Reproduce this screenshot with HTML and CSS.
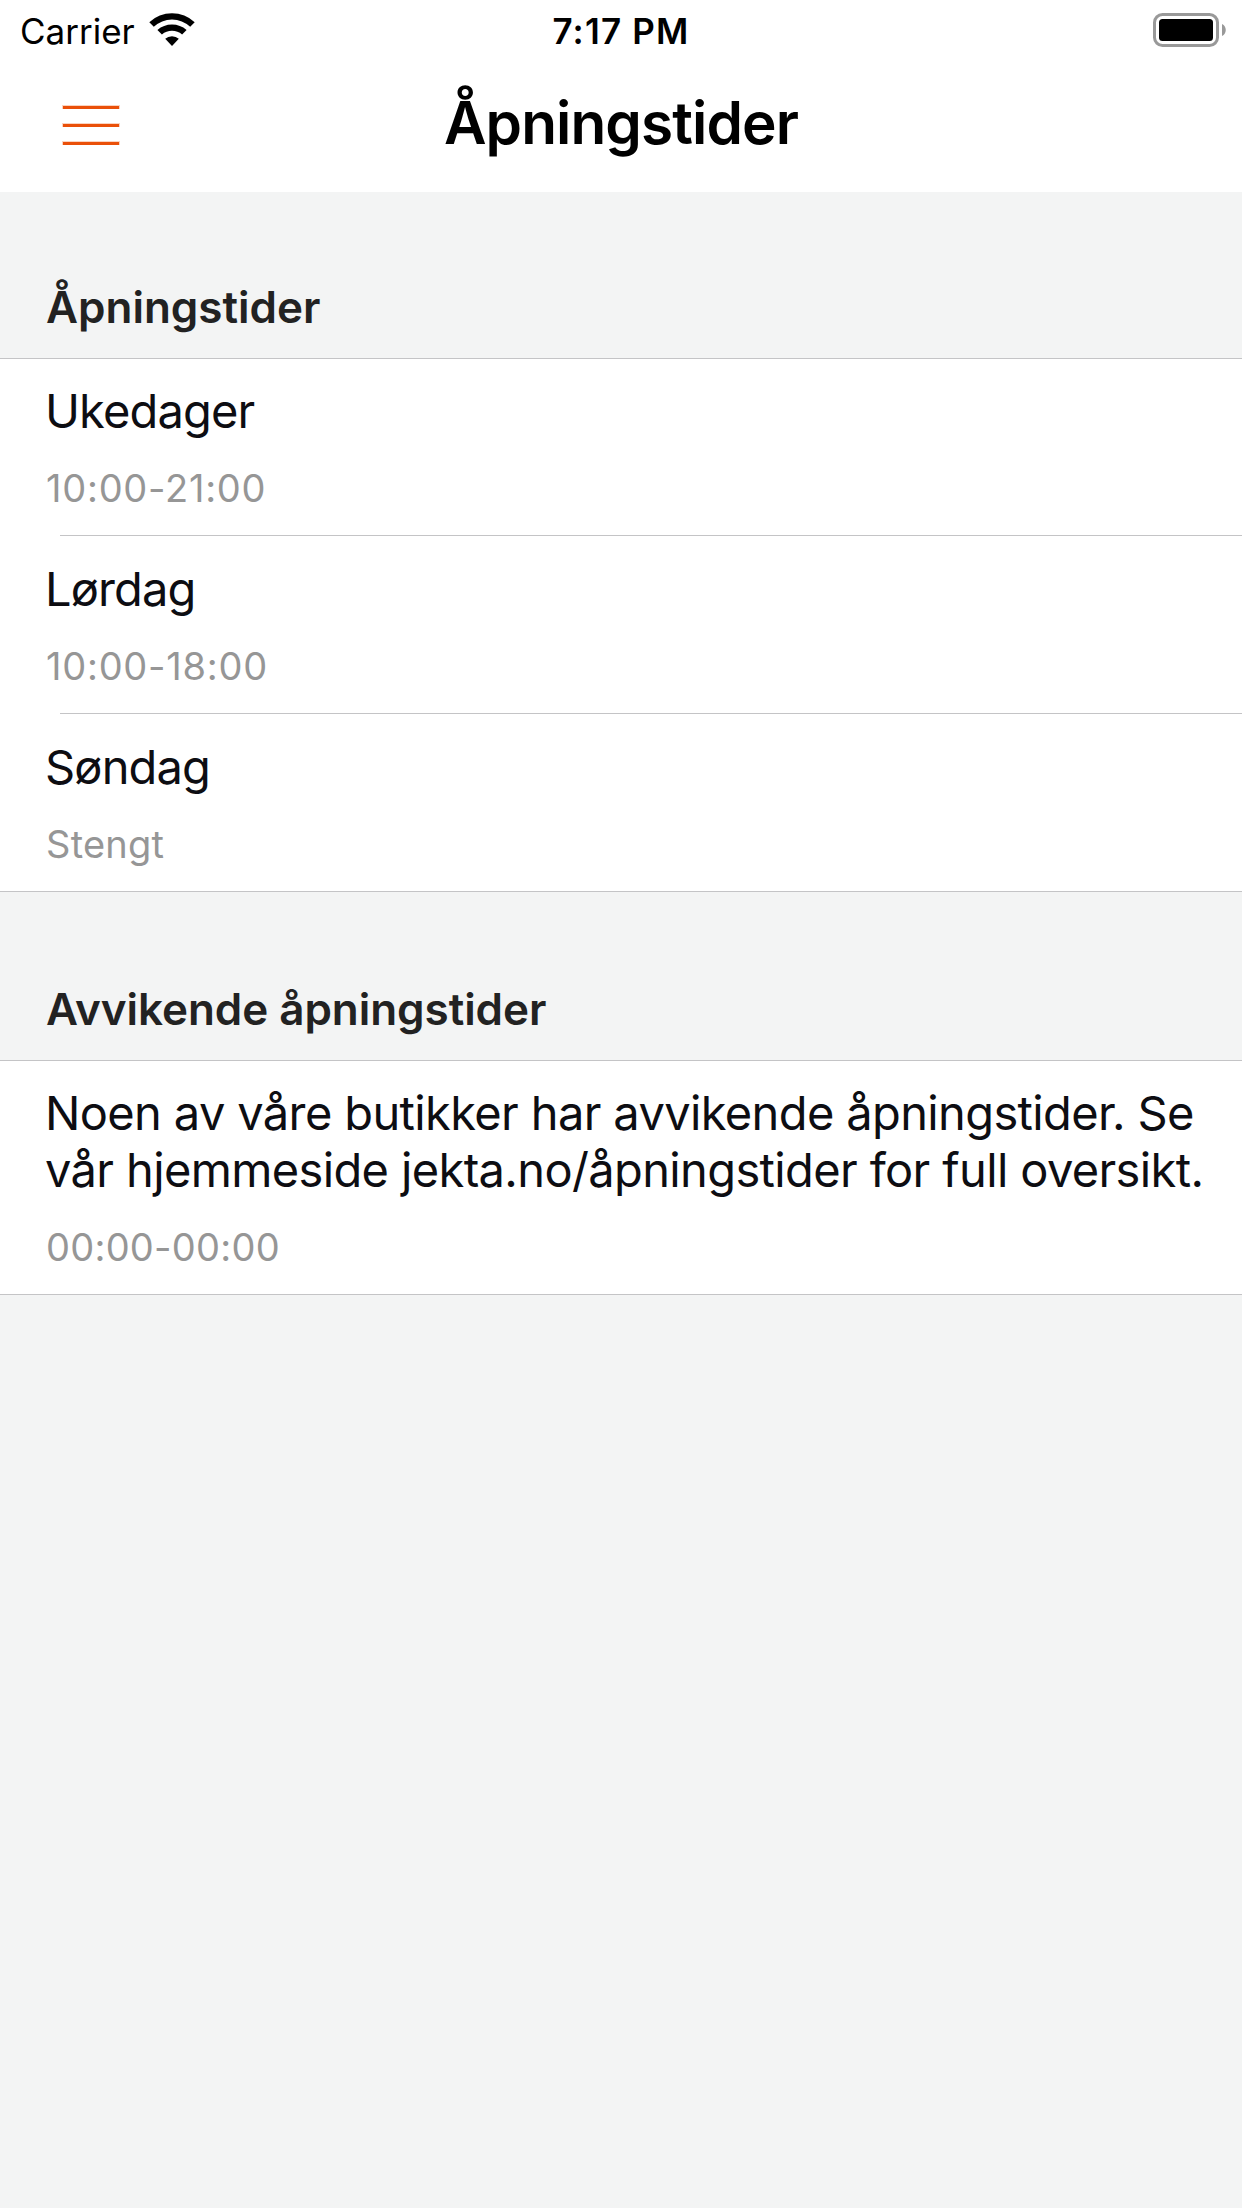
FILE: index.html
```html
<!DOCTYPE html>
<html lang="no">
<head>
    <meta charset="UTF-8">
    <meta name="viewport" content="width=device-width, initial-scale=1.0">
    <title>Åpningstider</title>
    <link rel="stylesheet" href="styles.css">
</head>
<body>

    <div class="statusbar">
        <div class="carrier">
            <span>Carrier</span>
            <svg class="wifi" width="46" height="33" viewBox="0 0 46 33">
                <path d="M23 33l-6.800-7.200a10 10 0 0 1 13.600 0z"/>
                <path d="M8.400 17a22 22 0 0 1 29.200 0l-4.500 4.600a15.500 15.500 0 0 0-20.200 0z"/>
                <path d="M0.300 9.200a33 33 0 0 1 45.400 0l-4.500 4.600a26.500 26.500 0 0 0-36.400 0z"/>
            </svg>
        </div>
        <span class="clock">7:17 PM</span>
        <svg class="battery" width="73" height="34" viewBox="0 0 73 34">
            <rect class="battery-frame" x="1.500" y="1.500" width="63" height="31" rx="8"/>
            <rect x="6" y="6" width="54" height="22" rx="3.500"/>
            <path class="battery-tip" d="M69 11c5 2 5 10 0 12z"/>
        </svg>
    </div>

    <header class="navbar">
        <button class="menu" aria-label="Meny"><span></span><span></span><span></span></button>
        <h1>Åpningstider</h1>
    </header>

    <main>
        <section>
            <h2>Åpningstider</h2>
            <ul class="list">
                <li><p class="day">Ukedager</p><p class="time hours">10:00-21:00</p></li>
                <li><p class="day">Lørdag</p><p class="time hours">10:00-18:00</p></li>
                <li><p class="day">Søndag</p><p class="time">Stengt</p></li>
            </ul>
        </section>
        <section>
            <h2 class="second">Avvikende åpningstider</h2>
            <ul class="list">
                <li>
                    <p class="day notice">Noen av våre butikker har avvikende åpningstider. Se<br>vår hjemmeside jekta.no/åpningstider for full oversikt.</p>
                    <p class="time">00:00-00:00</p>
                </li>
            </ul>
        </section>
    </main>

</body>
</html>
```

FILE: styles.css
```css
* {
    margin: 0;
    padding: 0;
    box-sizing: border-box;
}

body {
    font-family: Inter, 'Liberation Sans', sans-serif;
    background-color: #f3f4f4;
    min-height: 2208px;
    color: #0d0d12;
}

/* Status bar */
.statusbar {
    display: grid;
    grid-template-columns: 1fr auto 1fr;
    height: 60px;
    padding: 0 16px 0 20px;
    background-color: #fff;
    color: #000;
    font-size: 35px;
    line-height: 62px;
}

.carrier {
    display: flex;
    gap: 14px;
}

.wifi {
    margin-top: 13px;
}

.clock {
    margin-right: 4px;
    font-weight: 560;
    letter-spacing: 1.2px;
}

.battery {
    justify-self: end;
    margin-top: 13px;
}

.battery-frame {
    fill: none;
    stroke: #999;
    stroke-width: 3;
}

.battery-tip {
    fill: #999;
}

/* Navigation */
.navbar {
    display: grid;
    grid-template-columns: 180px 1fr 180px;
    height: 132px;
    background-color: #fff;
    color: #000;
}

.menu {
    display: flex;
    flex-direction: column;
    gap: 14px;
    padding: 45px 0 0 62px;
    border: none;
    background: none;
}

.menu span {
    width: 58px;
    height: 4px;
    border: 1px solid #fbd3bf;
    border-bottom: none;
    background-color: #ea5009;
}

h1 {
    text-align: center;
    font-size: 58.5px;
    font-weight: 600;
    letter-spacing: -0.9px;
    line-height: 126px;
}

/* Sections */
h2 {
    height: 166px;
    padding: 86px 46px 0;
    font-size: 44px;
    font-weight: 600;
    line-height: 58px;
    color: #222;
}

h2.second {
    height: 168px;
    padding-top: 88px;
    letter-spacing: -0.05px;
}

.list {
    list-style: none;
    background-color: #fff;
    border-top: 1px solid #c4c4c6;
    border-bottom: 1px solid #c4c4c6;
}

.list li {
    padding-top: 24px;
}

.list li:first-child {
    padding-top: 23px;
}

/* Inset line between rows */
.list li::after {
    content: '';
    display: block;
    height: 1px;
    margin: 23px 0 0 60px;
    background-color: #c4c4c6;
}

.list li:last-child {
    padding-bottom: 23px;
}

.list li:last-child::after {
    display: none;
}

.day {
    padding-left: 45px;
    font-size: 47px;
    line-height: 57px;
    letter-spacing: -0.85px;
    white-space: nowrap;
}

.notice {
    letter-spacing: -0.63px;
}

.time {
    margin-top: 25px;
    padding-left: 46px;
    font-size: 38px;
    line-height: 48px;
    letter-spacing: 0.25px;
    color: #969696;
}

.hours {
    letter-spacing: 0.75px;
}
```
